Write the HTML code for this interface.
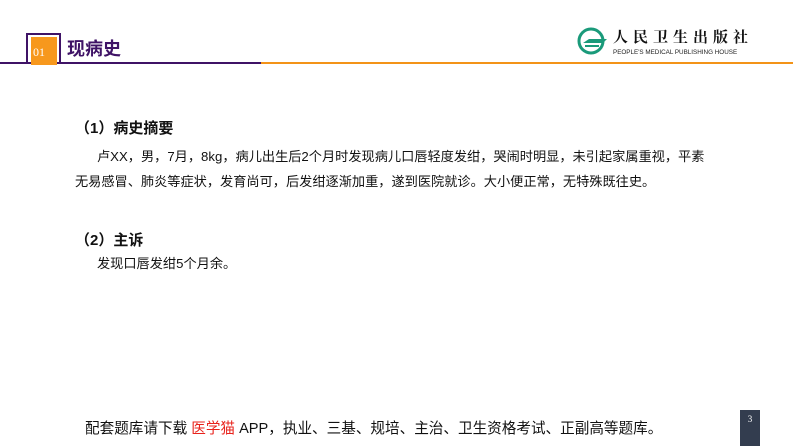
<!DOCTYPE html>
<html><head><meta charset="utf-8"><style>
body{margin:0;width:793px;height:446px;background:#fff;position:relative;overflow:hidden;font-family:"Liberation Sans","Noto Sans CJK SC",sans-serif;color:#111}
.a{position:absolute;white-space:nowrap}
</style></head><body>
<div class="a" style="left:0;top:62px;width:261px;height:2px;background:#3f1366"></div>
<div class="a" style="left:261px;top:62px;width:532px;height:2px;background:#f39318"></div>
<div class="a" style="left:26px;top:33px;width:31px;height:29px;border:2px solid #3f1366;border-bottom:none"></div>
<div class="a" style="left:31px;top:37px;width:26px;height:28px;background:#f7981d"></div>
<div class="a" style="left:33px;top:45px;font-family:'Liberation Serif',serif;font-size:12px;color:#fff">01</div>
<div class="a" style="left:67px;top:35px;font-size:18px;font-weight:bold;color:#3f1366">现病史</div>
<svg class="a" style="left:577px;top:27px" width="32" height="28" viewBox="0 0 32 28"><circle cx="14" cy="14" r="12" fill="none" stroke="#1a9a7a" stroke-width="3"/><path d="M6 16h20l4-4H12z" fill="#1a9a7a"/><path d="M8 19h14" stroke="#1a9a7a" stroke-width="2"/></svg>
<div class="a" style="left:613px;top:28px;font-size:15px;font-weight:bold;letter-spacing:5px;color:#111;font-family:'Noto Serif CJK SC',serif;line-height:17px">人民卫生出版社</div>
<div class="a" style="left:613px;top:49px;font-size:6.3px;color:#222">PEOPLE'S MEDICAL PUBLISHING HOUSE</div>
<div class="a" style="left:75px;top:117px;font-size:15px;font-weight:bold">（1）病史摘要</div>
<div class="a" style="left:97px;top:146px;font-size:13.2px">卢XX，男，7月，8kg，病儿出生后2个月时发现病儿口唇轻度发绀，哭闹时明显，未引起家属重视，平素</div>
<div class="a" style="left:75px;top:171px;font-size:13.2px">无易感冒、肺炎等症状，发育尚可，后发绀逐渐加重，遂到医院就诊。大小便正常，无特殊既往史。</div>
<div class="a" style="left:75px;top:229px;font-size:15px;font-weight:bold">（2）主诉</div>
<div class="a" style="left:97px;top:253px;font-size:13.2px">发现口唇发绀5个月余。</div>
<div class="a" style="left:85px;top:417px;font-size:14.6px">配套题库请下载 <span style="color:#e8231c">医学猫</span> APP，执业、三基、规培、主治、卫生资格考试、正副高等题库。</div>
<div class="a" style="left:740px;top:410px;width:20px;height:36px;background:#333d4f;color:#fff;font-family:'Liberation Serif',serif;font-size:9px;text-align:center;line-height:18px">3</div>
</body></html>
